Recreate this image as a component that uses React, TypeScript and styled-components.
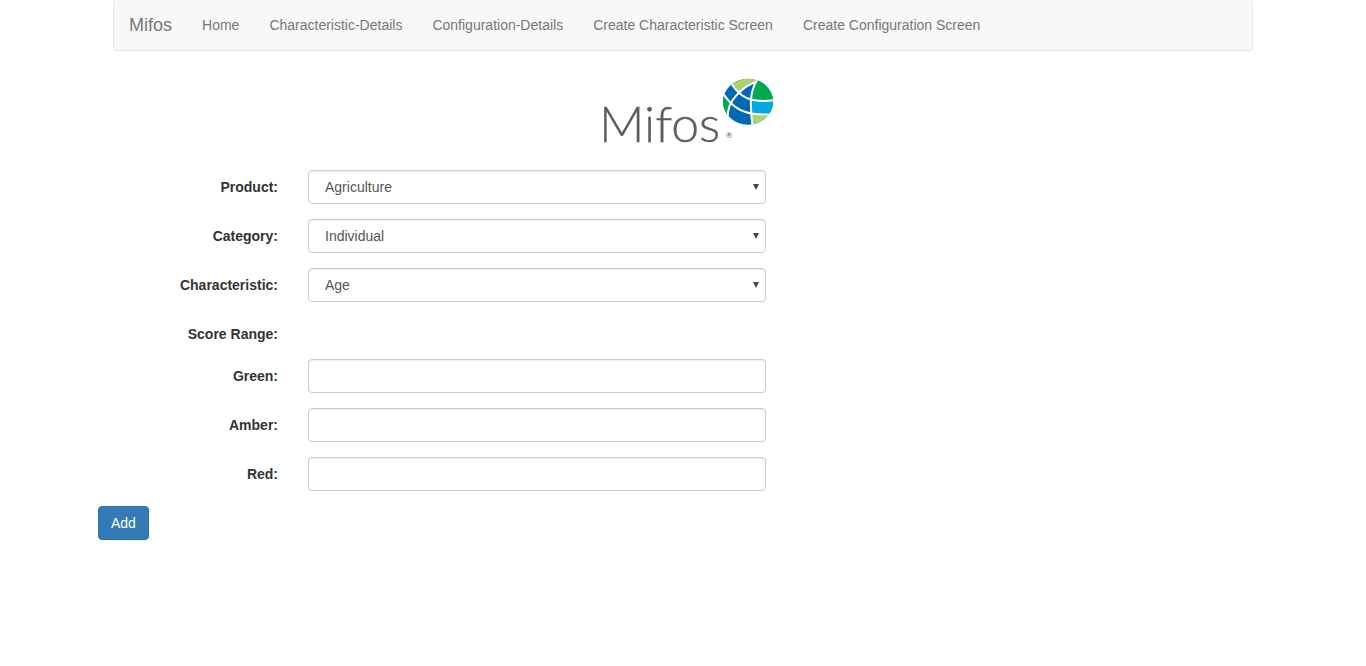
import React from "react";
import styled, { createGlobalStyle, css } from "styled-components";

const GlobalStyle = createGlobalStyle`
  *, *::before, *::after { box-sizing: border-box; }
  body {
    margin: 0;
    background: #fff;
    color: #333;
    font-family: "Liberation Sans", Arial, sans-serif;
    font-size: 14px;
    line-height: 20px;
  }
`;

const Container = styled.div`
  max-width: 1170px;
  margin: 0 auto;
`;

const Navbar = styled.nav`
  display: flex;
  flex-wrap: wrap;
  margin: 0 15px 20px;
  background: #f8f8f8;
  border: 1px solid #e7e7e7;
  border-top: 0;
  border-radius: 4px;
`;

const Brand = styled.a`
  padding: 15px;
  font-size: 18px;
  color: #777;
  text-decoration: none;
`;

const NavList = styled.ul`
  display: flex;
  flex-wrap: wrap;
  margin: 0;
  padding: 0;
  list-style: none;
`;

const NavLink = styled.a`
  display: block;
  padding: 15px;
  color: #777;
  text-decoration: none;
`;

const LogoRow = styled.div`
  display: flex;
  justify-content: center;
  padding-left: 14px;
  margin-bottom: 9px;
`;

const Row = styled.div`
  display: grid;
  grid-template-columns: 195px minmax(0, 458px);
  column-gap: 15px;
  margin-bottom: 15px;
`;

const Label = styled.label`
  padding-top: 7px;
  padding-right: 15px;
  font-weight: 700;
  text-align: right;
`;

const SelectWrap = styled.div`
  position: relative;
`;

const controlStyle = css`
  display: block;
  width: 100%;
  height: 34px;
  border: 1px solid #ccc;
  border-radius: 4px;
  background: #fff;
  box-shadow: inset 0 1px 1px rgba(0, 0, 0, 0.075);
  color: #555;
  font: inherit;
`;

const Select = styled.select`
  ${controlStyle}
  appearance: none;
  padding: 6px 16px;
`;

const Arrow = styled.svg`
  position: absolute;
  top: 14px;
  right: 7px;
  pointer-events: none;
`;

const Input = styled.input`
  ${controlStyle}
  padding: 6px 12px;
`;

const AddButton = styled.button`
  height: 34px;
  padding: 6px 12px;
  border: 1px solid #2e6da4;
  border-radius: 4px;
  background: #337ab7;
  color: #fff;
  font: inherit;
`;

const links = [
  "Home",
  "Characteristic-Details",
  "Configuration-Details",
  "Create Characteristic Screen",
  "Create Configuration Screen",
];

const selects = [
  { id: "product", label: "Product:", value: "Agriculture" },
  { id: "category", label: "Category:", value: "Individual" },
  { id: "characteristic", label: "Characteristic:", value: "Age" },
];

const scores = [
  { id: "green", label: "Green:" },
  { id: "amber", label: "Amber:" },
  { id: "red", label: "Red:" },
];

function Logo() {
  return (
    <svg width="190" height="90" viewBox="0 3 570 270" role="img" aria-label="Mifos">
      <text x="12" y="216" fontFamily="Lato, sans-serif" fontWeight="300" fontSize="150" fill="#5b5d60" stroke="#5b5d60" strokeWidth="1">
        Mifos
      </text>
      <text x="392" y="205" fontFamily="Lato, sans-serif" fontSize="24" fill="#5b5d60">
        ®
      </text>
      <clipPath id="globe">
        <ellipse cx="459" cy="95" rx="75" ry="69" />
      </clipPath>
      <g clipPath="url(#globe)">
        <rect x="380" y="20" width="160" height="150" fill="#0069b4" />
        <path d="M400 20H492L484 38Q458 46 433 66Q422 52 412 42Z" fill="#a9d46c" />
        <path d="M490 20H540V92Q500 94 468 86Q472 56 490 30Z" fill="#00ab4e" />
        <path d="M469 88Q500 98 540 92V134Q505 136 470 130Z" fill="#00a7e1" />
        <path d="M470 132Q505 140 540 132V170H472Z" fill="#a9d46c" />
        <path d="M380 66Q392 84 408 98Q396 118 398 144H380Z" fill="#00ab4e" />
        <g fill="none" stroke="#fff" strokeWidth="6">
          <path d="M492 20Q464 62 468 110Q468 140 473 170" />
          <path d="M406 36Q436 84 474 90Q510 96 540 90" />
          <path d="M382 66Q416 124 474 131Q510 136 540 132" />
          <path d="M484 36Q454 44 424 76Q396 106 398 146" />
        </g>
      </g>
    </svg>
  );
}

export default function App() {
  return (
    <>
      <GlobalStyle />
      <Container>
        <Navbar>
          <Brand href="#">Mifos</Brand>
          <NavList>
            {links.map((text) => (
              <li key={text}>
                <NavLink href="#">{text}</NavLink>
              </li>
            ))}
          </NavList>
        </Navbar>
        <LogoRow>
          <Logo />
        </LogoRow>
        <form onSubmit={(e) => e.preventDefault()}>
          {selects.map((s) => (
            <Row key={s.id}>
              <Label htmlFor={s.id}>{s.label}</Label>
              <SelectWrap>
                <Select id={s.id} defaultValue={s.value}>
                  <option>{s.value}</option>
                </Select>
                <Arrow width="6" height="6" viewBox="0 0 6 6" aria-hidden="true">
                  <path d="M0 0H6L3 6Z" fill="#444" />
                </Arrow>
              </SelectWrap>
            </Row>
          ))}
          <Row>
            <Label as="span">Score Range:</Label>
          </Row>
          {scores.map((s) => (
            <Row key={s.id}>
              <Label htmlFor={s.id}>{s.label}</Label>
              <Input id={s.id} type="text" />
            </Row>
          ))}
          <AddButton type="submit">Add</AddButton>
        </form>
      </Container>
    </>
  );
}
